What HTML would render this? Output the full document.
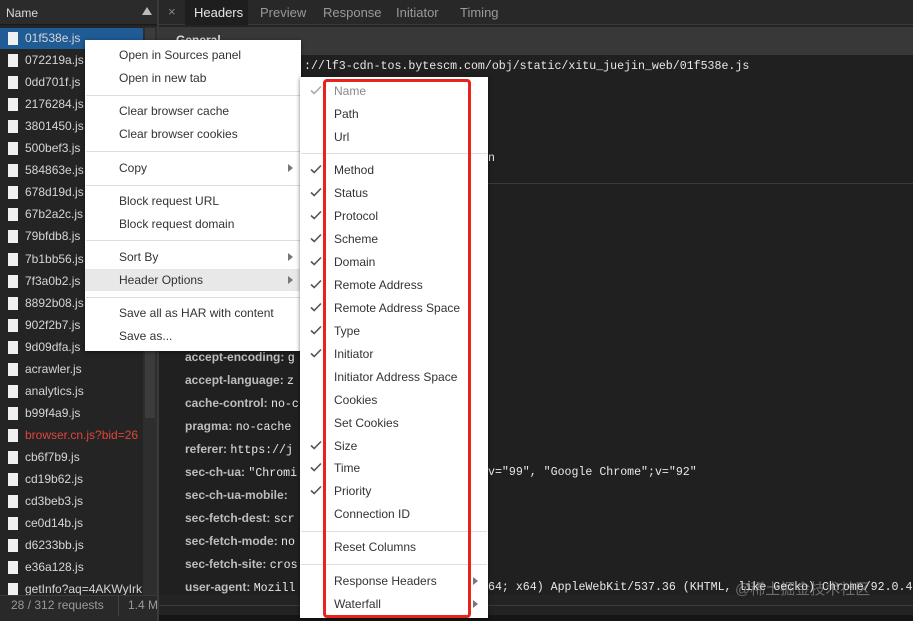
<!DOCTYPE html>
<html><head><meta charset="utf-8"><style>
*{margin:0;padding:0;box-sizing:border-box}
body{width:913px;height:621px;overflow:hidden;background:#232323;font-family:"Liberation Sans","Noto Sans CJK SC",sans-serif;position:relative}
.a{position:absolute;white-space:nowrap}
.f{font-size:12px;color:#d6d6d6;left:25px;width:117px;overflow:hidden}
.ic{position:absolute;left:8px;width:10px;height:13px;background:#f0f0f0}
.m{font-size:12px;color:#333;position:absolute;white-space:nowrap}
.mono{font-family:"Liberation Mono",monospace;font-size:11.6px;color:#e8e8e8;font-weight:normal}
.hk{font-size:12px;color:#bdbdbd;font-weight:bold;left:185px}
.sep{position:absolute;height:1px;background:#dedede}
.ck{position:absolute;left:310px}
.arr{position:absolute;width:0;height:0;border-left:5px solid #777;border-top:4px solid transparent;border-bottom:4px solid transparent}
</style></head><body>
<div class="a" style="left:0;top:0;width:157px;height:621px;background:#242424"></div>
<div class="a" style="left:0;top:0;width:157px;height:25px;background:#2b2b2b;border-bottom:1px solid #1a1a1a"></div>
<div class="a" style="left:6px;top:6px;font-size:12px;color:#dcdcdc">Name</div>
<div class="a" style="left:142px;top:7px;width:0;height:0;border-left:5px solid transparent;border-right:5px solid transparent;border-bottom:8px solid #bbb"></div>
<div class="a" style="left:143px;top:27px;width:14px;height:568px;background:#2e2e2e"></div>
<div class="a" style="left:145px;top:28px;width:10px;height:390px;background:#3c3c3c"></div>
<div class="a" style="left:0;top:28px;width:143px;height:21px;background:#1f5b94"></div>
<div id="files"></div>
<div class="a" style="left:0;top:595px;width:157px;height:26px;background:#292929;border-top:1px solid #3a3a3a"></div>
<div class="a" style="left:11px;top:598px;font-size:12px;color:#9a9a9a">28 / 312 requests</div>
<div class="a" style="left:118px;top:596px;width:1px;height:20px;background:#444"></div>
<div class="a" style="left:128px;top:598px;font-size:12px;color:#9a9a9a">1.4 M</div>
<div class="a" style="left:157px;top:0;width:2px;height:621px;background:#3a3a3a"></div>
<div class="a" style="left:159px;top:0;width:754px;height:25px;background:#282828;border-bottom:1px solid #3a3a3a"></div>
<div class="a" style="left:168px;top:4px;font-size:13px;color:#888">×</div>
<div class="a" style="left:185px;top:0;width:63px;height:25px;background:#1e1e1e"></div>
<div class="a" style="left:194px;top:5px;font-size:13px;color:#e6e6e6">Headers</div>
<div class="a" style="left:260px;top:5px;font-size:13px;color:#9a9a9a">Preview</div>
<div class="a" style="left:323px;top:5px;font-size:13px;color:#9a9a9a">Response</div>
<div class="a" style="left:396px;top:5px;font-size:13px;color:#9a9a9a">Initiator</div>
<div class="a" style="left:460px;top:5px;font-size:13px;color:#9a9a9a">Timing</div>
<div class="a" style="left:159px;top:27px;width:754px;height:28px;background:#383838"></div>
<div class="a" style="left:159px;top:55px;width:754px;height:540px;background:#202020"></div>
<div class="a" style="left:176px;top:33px;font-size:12px;color:#ddd;font-weight:bold">General</div>
<div class="a mono" style="left:304px;top:60px">://lf3-cdn-tos.bytescm.com/obj/static/xitu_juejin_web/01f538e.js</div>
<div class="a mono" style="left:488px;top:152px">n</div>
<div class="a" style="left:159px;top:183px;width:754px;height:1px;background:#3a3a3a"></div>
<div class="a hk" style="top:350px">accept-encoding: <span class="mono">g</span></div>
<div class="a hk" style="top:373px">accept-language: <span class="mono">z</span></div>
<div class="a hk" style="top:396px">cache-control: <span class="mono">no-c</span></div>
<div class="a hk" style="top:419px">pragma: <span class="mono">no-cache</span></div>
<div class="a hk" style="top:442px">referer: <span class="mono">https://j</span></div>
<div class="a hk" style="top:465px">sec-ch-ua: <span class="mono">"Chromi</span></div>
<div class="a mono" style="left:488px;top:466px">v="99", "Google Chrome";v="92"</div>
<div class="a hk" style="top:488px">sec-ch-ua-mobile:</div>
<div class="a hk" style="top:511px">sec-fetch-dest: <span class="mono">scr</span></div>
<div class="a hk" style="top:534px">sec-fetch-mode: <span class="mono">no</span></div>
<div class="a hk" style="top:557px">sec-fetch-site: <span class="mono">cros</span></div>
<div class="a hk" style="top:580px">user-agent: <span class="mono">Mozill</span></div>
<div class="a mono" style="left:488px;top:581px">64; x64) AppleWebKit/537.36 (KHTML, like Gecko) Chrome/92.0.45</div>
<div class="a" style="left:735px;top:578px;font-size:15px;color:rgba(200,200,200,.45)">@稀土掘金技术社区</div>
<div class="a" style="left:159px;top:605px;width:754px;height:1px;background:#3a3a3a"></div>
<div class="a" style="left:159px;top:615px;width:754px;height:6px;background:#151515"></div>
<div class="a" style="left:85px;top:40px;width:216px;height:311px;background:#fff;box-shadow:0 1px 4px rgba(0,0,0,.5)"></div>
<div class="a" style="left:85px;top:269px;width:216px;height:22px;background:#e8e8e8"></div>
<div class="m" style="left:119px;top:48px">Open in Sources panel</div>
<div class="m" style="left:119px;top:71px">Open in new tab</div>
<div class="sep" style="left:86px;top:95px;width:214px"></div>
<div class="m" style="left:119px;top:104px">Clear browser cache</div>
<div class="m" style="left:119px;top:127px">Clear browser cookies</div>
<div class="sep" style="left:86px;top:151px;width:214px"></div>
<div class="m" style="left:119px;top:161px">Copy</div>
<div class="arr" style="left:288px;top:164px"></div>
<div class="sep" style="left:86px;top:185px;width:214px"></div>
<div class="m" style="left:119px;top:194px">Block request URL</div>
<div class="m" style="left:119px;top:217px">Block request domain</div>
<div class="sep" style="left:86px;top:240px;width:214px"></div>
<div class="m" style="left:119px;top:250px">Sort By</div>
<div class="arr" style="left:288px;top:253px"></div>
<div class="m" style="left:119px;top:273px">Header Options</div>
<div class="arr" style="left:288px;top:276px"></div>
<div class="sep" style="left:86px;top:297px;width:214px"></div>
<div class="m" style="left:119px;top:306px">Save all as HAR with content</div>
<div class="m" style="left:119px;top:329px">Save as...</div>
<div class="a" style="left:300px;top:77px;width:188px;height:541px;background:#fff;box-shadow:0 1px 4px rgba(0,0,0,.5)"></div>
<div id="sub"></div>
<div class="arr" style="left:473px;top:577px"></div>
<div class="arr" style="left:473px;top:600px"></div>
<div class="a" style="left:323px;top:79px;width:148px;height:539px;border:3px solid #e8231e;border-radius:4px"></div>
<script>
var f=["01f538e.js","072219a.js","0dd701f.js","2176284.js","3801450.js","500bef3.js","584863e.js","678d19d.js","67b2a2c.js","79bfdb8.js","7b1bb56.js","7f3a0b2.js","8892b08.js","902f2b7.js","9d09dfa.js","acrawler.js","analytics.js","b99f4a9.js","browser.cn.js?bid=26","cb6f7b9.js","cd19b62.js","cd3beb3.js","ce0d14b.js","d6233bb.js","e36a128.js","getInfo?aq=4AKWyIrk"];
var h="";f.forEach(function(n,i){var y=31+i*22.05;h+='<div class="ic" style="top:'+(y+1)+'px"></div><div class="a f" style="top:'+y+'px;'+(i==18?'color:#e0453a':'')+'">'+n+'</div>';});
document.getElementById("files").innerHTML=h;
var s=[["Name",91,1,1],["Path",114],["Url",137],["-",153],["Method",170,1],["Status",193,1],["Protocol",216,1],["Scheme",239,1],["Domain",262,1],["Remote Address",285,1],["Remote Address Space",308,1],["Type",331,1],["Initiator",354,1],["Initiator Address Space",377],["Cookies",400],["Set Cookies",423],["Size",446,1],["Time",468,1],["Priority",491,1],["Connection ID",514],["-",531],["Reset Columns",547],["-",564],["Response Headers",581],["Waterfall",604]];
h="";s.forEach(function(e){if(e[0]=="-"){h+='<div class="sep" style="left:301px;top:'+e[1]+'px;width:186px"></div>';return;}
if(e[2])h+='<svg class="ck" style="top:'+(e[1]-6)+'px" width="12" height="10" viewBox="0 0 12 10"><path d="M1 5.5L4.2 8.5L11 1.5" fill="none" stroke="'+(e[3]?'#aaa':'#555')+'" stroke-width="1.6"/></svg>';
h+='<div class="m" style="left:334px;top:'+(e[1]-7)+'px;'+(e[3]?'color:#888':'')+'">'+e[0]+'</div>';});
document.getElementById("sub").innerHTML=h;
</script>
</body></html>
